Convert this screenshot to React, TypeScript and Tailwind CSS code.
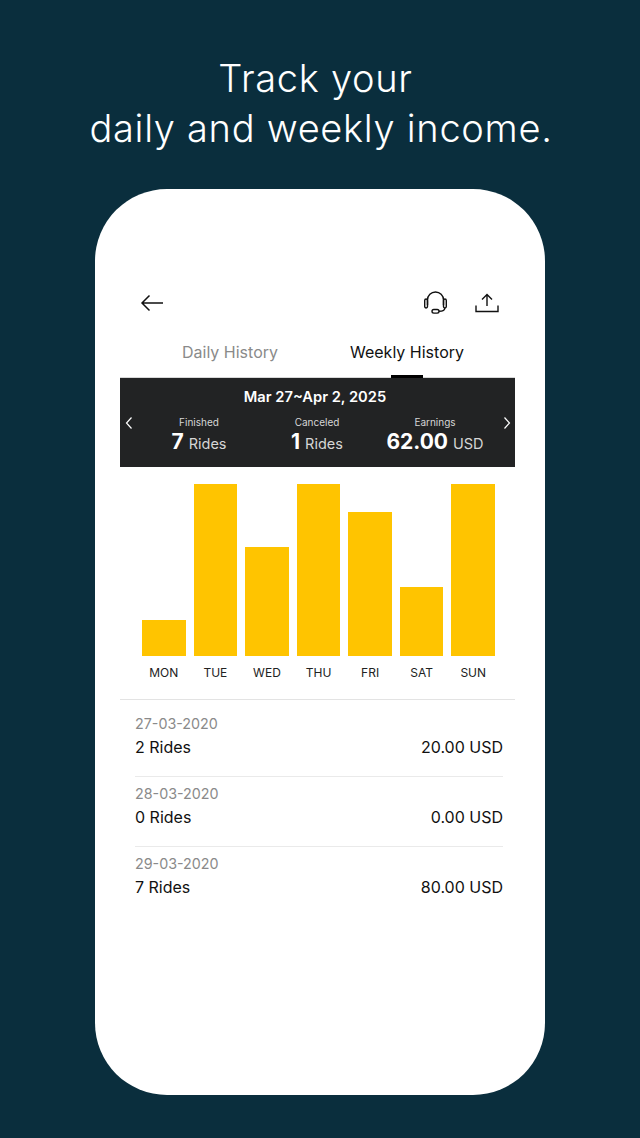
import React from "react";

const bars = [
  { d: "MON", h: 36 },
  { d: "TUE", h: 172 },
  { d: "WED", h: 109 },
  { d: "THU", h: 172 },
  { d: "FRI", h: 144 },
  { d: "SAT", h: 69 },
  { d: "SUN", h: 172 },
];

const rows = [
  { date: "27-03-2020", rides: "2 Rides", amt: "20.00 USD" },
  { date: "28-03-2020", rides: "0 Rides", amt: "0.00 USD" },
  { date: "29-03-2020", rides: "7 Rides", amt: "80.00 USD" },
];

function Chevron({ dir }: { dir: "l" | "r" }) {
  return (
    <svg width="8" height="14" viewBox="0 0 8 14" fill="none" stroke="#fff" strokeWidth="1.2" className="shrink-0">
      <path d={dir === "l" ? "M6.5 1.5 1.5 7l5 5.5" : "M1.5 1.5 6.5 7l-5 5.5"} />
    </svg>
  );
}

function Stat({ label, value, unit, w }: { label: string; value: string; unit: string; w: string }) {
  return (
    <div className={`${w} text-center`}>
      <div className="text-[10px] leading-[14px] text-[#d6d6d6]">{label}</div>
      <div className="-mt-[1px] leading-[28px] text-[#d6d6d6] text-[14.5px] whitespace-nowrap">
        <span className="text-[21px] font-bold text-white mr-[5px]">{value}</span>
        {unit}
      </div>
    </div>
  );
}

export default function App() {
  return (
    <div className="w-[640px] h-[1138px] bg-[#0a2e3d] flex flex-col items-center overflow-hidden font-['Inter',sans-serif]">
      <h1 className="mt-[53px] h-[100px] text-white text-center text-[38px] leading-[50px] font-light tracking-[0.7px] whitespace-nowrap">
        <span className="pr-[9px]">Track your</span>
        <br />
        <span className="pl-[2px]">daily and weekly income.</span>
      </h1>
      <div className="mt-[36px] w-[450px] h-[906px] bg-white rounded-[72px] flex flex-col pl-[25px] pr-[30px] pt-[100px]">
        <div className="flex items-center justify-between h-[28px] pl-[20px] pr-[16px]">
          <svg width="24" height="18" viewBox="0 0 24 18" fill="none" stroke="#111" strokeWidth="1.5">
            <path d="M23 9H2M9.5 1.5 2 9l7.5 7.5" />
          </svg>
          <div className="flex items-center gap-[27px]">
            <svg width="24" height="26" viewBox="0 0 24 26" fill="none" stroke="#111" strokeWidth="1.4">
              <path d="M3.5 15V10a8 8 0 0 1 16 0V15" />
              <rect x="0.7" y="9" width="2.8" height="9" rx="1.4" />
              <rect x="19.5" y="9" width="2.8" height="9" rx="1.4" />
              <path d="M20.8 18c0 2.2-2.2 3.3-5.8 3.3" />
              <rect x="8" y="19.5" width="7" height="3.6" rx="1.8" />
            </svg>
            <svg width="24" height="20" viewBox="0 0 24 20" fill="none" stroke="#111" strokeWidth="1.4">
              <path d="M12 13V2M7 6.5 12 1.5l5 5" />
              <path d="M1 12.5V18.5H23V12.5" />
            </svg>
          </div>
        </div>
        <div className="mt-[16px] mb-[6px] flex h-[38px] text-[16px] items-center">
          <div className="w-[220px] text-center text-[#8a8a8a]">Daily History</div>
          <div className="w-[134px] whitespace-nowrap text-center text-[#111]">Weekly History</div>
        </div>
        <div className="relative h-[90px] mb-[1px] bg-[#222324] border-t border-[#d8d8d8] text-white flex flex-col">
          <div className="absolute -top-[3px] left-[271px] w-[32px] h-[3px] bg-black" />
          <div className="text-center text-[14.7px] font-semibold leading-[18px] mt-[10px] pr-[5px]">Mar 27~Apr 2, 2025</div>
          <div className="flex items-start mt-[9px] pl-[5px] pr-[4px]">
            <div className="mt-[1px]"><Chevron dir="l" /></div>
            <Stat label="Finished" value="7" unit="Rides" w="w-[126px] ml-[3px]" />
            <Stat label="Canceled" value="1" unit="Rides" w="w-[110px]" />
            <Stat label="Earnings" value="62.00" unit="USD" w="w-[126px]" />
            <div className="mt-[1px] ml-auto"><Chevron dir="r" /></div>
          </div>
        </div>
        <div className="h-[188px] flex items-end justify-between pl-[22px] pr-[20px] gap-[8px]">
          {bars.map((b) => (
            <div key={b.d} className="flex-1 bg-[#ffc400]" style={{ height: b.h }} />
          ))}
        </div>
        <div className="flex justify-between pl-[22px] pr-[20px] gap-[8px] mt-[8px] h-[35px]">
          {bars.map((b) => (
            <div key={b.d} className="flex-1 text-center text-[12px] leading-[18px] text-[#222]">{b.d}</div>
          ))}
        </div>
        <div className="border-t border-[#e3e3e3] pt-[7px] pl-[15px] pr-[12px]">
          {rows.map((r, i) => (
            <div key={r.date} className={i < 2 ? "h-[70px] pt-[6px] border-b border-[#eaeaea]" : "h-[70px] pt-[6px]"}>
              <div className="text-[14.3px] leading-[21px] text-[#8a8a8a]">{r.date}</div>
              <div className="mt-[1px] flex justify-between text-[16px] leading-[24px] text-[#111]">
                <span>{r.rides}</span>
                <span>{r.amt}</span>
              </div>
            </div>
          ))}
        </div>
      </div>
    </div>
  );
}
